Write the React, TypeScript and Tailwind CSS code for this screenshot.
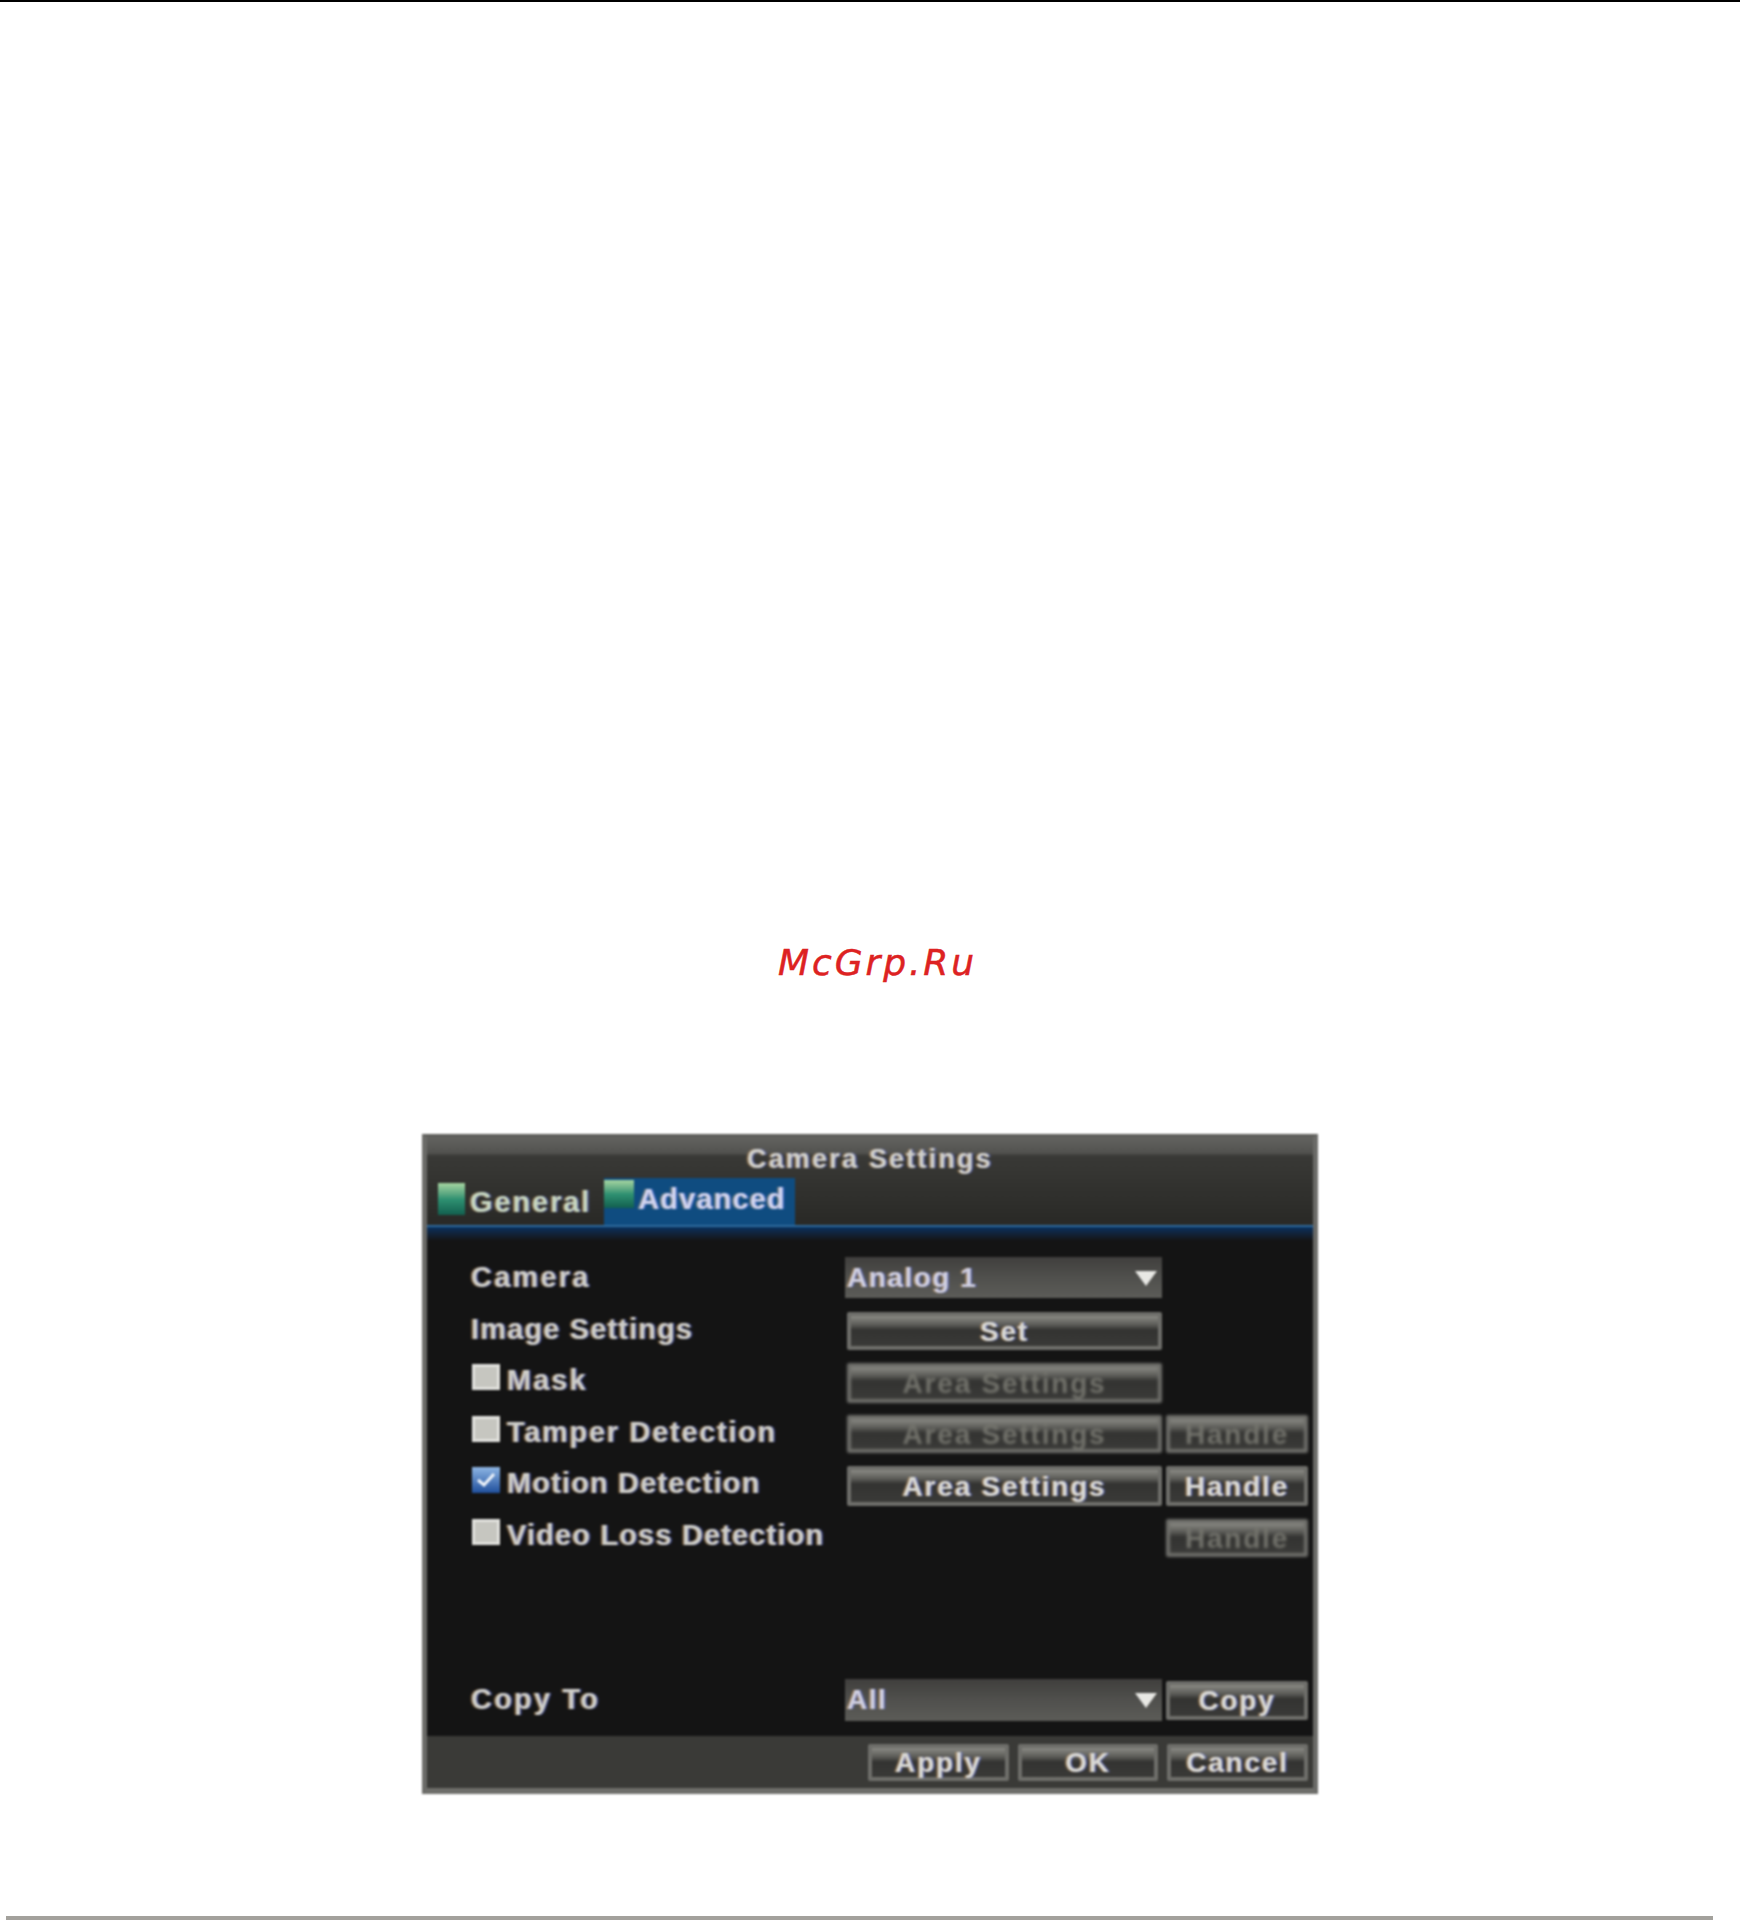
const labelFont = "font-['Liberation_Sans',Arial,sans-serif]";
const fringe = '[text-shadow:1.5px_0_1px_rgba(110,130,255,0.5),-1.5px_0_1px_rgba(255,190,110,0.45)]';

function Btn({ label, disabled, className }: { label: string; disabled?: boolean; className: string }) {
  return (
    <div
      className={`flex items-center justify-center rounded-[2px] border-[4px] border-[#6e6e6a] bg-[linear-gradient(#8a8a84_0,#5a5a56_9px,#333331_14px,#3a3a38_100%)] pt-[2px] text-[28px] font-bold tracking-[1.8px] ${labelFont} ${
        disabled ? 'text-[#73736c] blur-[1.2px]' : `text-[#d8d8d4] ${fringe}`
      } ${className}`}
    >
      {label}
    </div>
  );
}

function Select({ label, className }: { label: string; className: string }) {
  return (
    <div className={`flex items-center justify-between bg-linear-to-b from-[#403f3d] via-[#50504d] to-[#5c5c58] pl-[2px] pr-[4px] ${className}`}>
      <span className={`text-[28px] font-bold tracking-[1.5px] text-[#cfcfe0] ${labelFont} ${fringe}`}>{label}</span>
      <svg width="24" height="22" viewBox="0 0 24 22">
        <path d="M1 4h22L12 19z" fill="#e8e8e4" />
      </svg>
    </div>
  );
}

function Check({ checked }: { checked?: boolean }) {
  return (
    <div
      className={`mb-[8px] ml-[1px] flex h-[26px] w-[28px] shrink-0 items-center justify-center ${
        checked ? 'bg-linear-to-b from-[#8fb6e4] to-[#1f4f9c]' : 'border-[3px] border-[#e2e2de] bg-[#c6c6c0]'
      }`}
    >
      {checked && (
        <svg width="22" height="18" viewBox="0 0 22 18">
          <path d="M3 9l6 5L19 3" fill="none" stroke="#f2f6fb" strokeWidth="3" />
        </svg>
      )}
    </div>
  );
}

function Row({
  label,
  check,
  checked,
  spacing = 'tracking-[1.15px]',
  children,
}: {
  label: string;
  check?: boolean;
  checked?: boolean;
  spacing?: string;
  children?: React.ReactNode;
}) {
  return (
    <div className="flex h-[51.6px] shrink-0 items-center">
      <div className="flex w-[418px] shrink-0 items-center gap-[7px] pl-[44px]">
        {check && <Check checked={checked} />}
        <span className={`whitespace-nowrap text-[29px] font-bold text-[#cdcdc8] ${spacing} ${labelFont} ${fringe}`}>{label}</span>
      </div>
      {children}
    </div>
  );
}

function TabIcon({ className }: { className: string }) {
  return <div className={`bg-linear-to-b from-[#a6d6a2] via-[#2f9272] to-[#12604f] ${className}`} />;
}

export default function App() {
  return (
    <div className="flex h-[1921px] w-[1740px] flex-col overflow-hidden bg-white">
      <div className="h-[2px] bg-black" />

      <div className="mt-[935px] ml-[778px] h-[52px] font-['DejaVu_Sans',sans-serif] text-[36px] leading-[52px] tracking-[2.9px] text-[#dd2222] italic [-webkit-text-stroke:0.5px_#dd2222]">
        McGrp.Ru
      </div>

      <div className="mt-[145px] ml-[422px] flex h-[660px] w-[896px] flex-col border-x-[5px] border-t-[3px] border-b-[6px] border-x-[#6b6b68] border-t-[#5e5e5a] border-b-[#6e6e6a] bg-[#141414] blur-[1px]">
        {/* title + tabs */}
        <div className="flex h-[90px] shrink-0 flex-col border-b-[2px] border-b-[#2f6a9c] bg-[linear-gradient(#636360_0,#52524f_16px,#393936_19px,#292926_100%)]">
          <div className={`h-[41px] pt-[2px] text-center text-[27px] font-bold tracking-[2.2px] text-[#cfcfca] ${labelFont} ${fringe}`}>
            Camera Settings
          </div>
          <div className="flex h-[47px] items-stretch pl-[11px]">
            <div className="flex items-start gap-[5px] pt-[3px] pr-[13px]">
              <TabIcon className="mt-[2px] h-[32px] w-[27px]" />
              <span className={`text-[29px] font-bold tracking-[1.9px] text-[#c6d6c0] ${labelFont} ${fringe}`}>General</span>
            </div>
            <div className="flex items-start gap-[4px] bg-[#0f4c80] pr-[9px]">
              <TabIcon className="mt-[2px] h-[28px] w-[30px]" />
              <span className={`text-[29px] font-bold tracking-[1.1px] text-[#cfd3ee] ${labelFont} ${fringe}`}>Advanced</span>
            </div>
          </div>
        </div>

        {/* body */}
        <div className="flex flex-1 flex-col bg-linear-to-b from-[#07305e] from-0% to-[#141414] to-[14px] pt-[25px] pb-[10px]">
          <Row label="Camera" spacing="tracking-[2.2px]">
            <Select label="Analog 1" className="h-[41px] w-[317px]" />
          </Row>
          <Row label="Image Settings">
            <Btn label="Set" className="mt-[4px] ml-[2px] h-[38px] w-[315px]" />
          </Row>
          <Row label="Mask" check spacing="tracking-[2px]">
            <Btn label="Area Settings" disabled className="mt-[4px] ml-[2px] h-[40px] w-[315px]" />
          </Row>
          <Row label="Tamper Detection" check spacing="tracking-[1.7px]">
            <Btn label="Area Settings" disabled className="mt-[2px] ml-[2px] h-[38px] w-[315px]" />
            <Btn label="Handle" disabled className="mt-[2px] ml-[4px] h-[38px] w-[142px]" />
          </Row>
          <Row label="Motion Detection" check checked>
            <Btn label="Area Settings" className="mt-[4px] ml-[2px] h-[40px] w-[315px]" />
            <Btn label="Handle" className="mt-[4px] ml-[4px] h-[40px] w-[142px]" />
          </Row>
          <Row label="Video Loss Detection" check>
            <Btn label="Handle" disabled className="mt-[4px] ml-[321px] h-[38px] w-[142px]" />
          </Row>
          <div className="flex-1" />
          <Row label="Copy To" spacing="tracking-[2.2px]">
            <Select label="All" className="h-[42px] w-[317px]" />
            <Btn label="Copy" className="ml-[4px] h-[39px] w-[142px]" />
          </Row>
        </div>

        {/* footer */}
        <div className="flex h-[52px] shrink-0 items-center justify-end gap-[9px] bg-[#3a3a37] pr-[5px] pl-[6px]">
          <Btn label="Apply" className="h-[37px] w-[141px]" />
          <Btn label="OK" className="h-[37px] w-[140px]" />
          <Btn label="Cancel" className="h-[37px] w-[141px]" />
        </div>
      </div>

      <div className="mt-[122px] ml-[6px] h-[4px] w-[1707px] bg-[#a3a19c]" />
    </div>
  );
}
